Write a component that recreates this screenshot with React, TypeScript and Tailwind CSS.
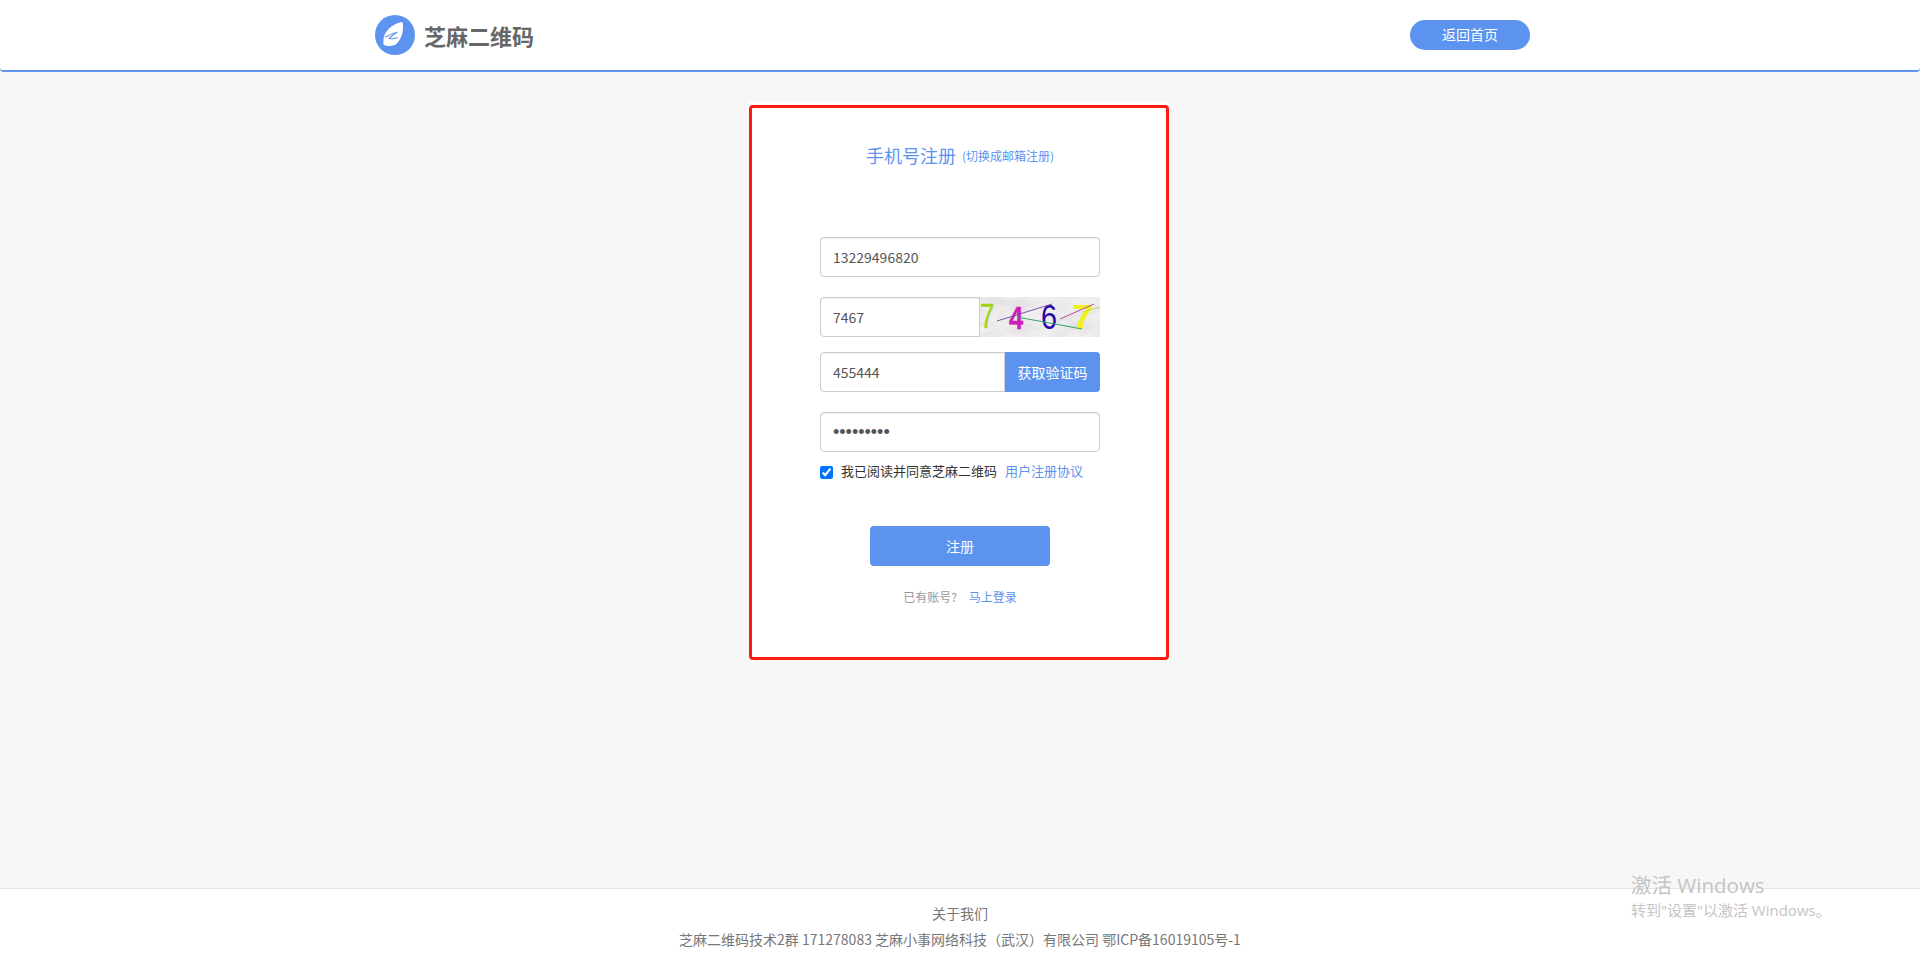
import React from 'react';

const fontStack = { fontFamily: '"Noto Sans CJK SC", "Noto Sans", sans-serif' };

function LogoMark() {
  return (
    <svg width="40" height="40" viewBox="0 0 40 40" className="shrink-0">
      <circle cx="20" cy="20" r="20" fill="#5b93ef" />
      <path d="M27.500 7C20 8 12.500 13 9.500 20c-1 3-1.400 6-1 9.500 3 2 7 2 10.500 .8C23 28.500 26 23.500 27.300 18.500 28.300 14 28.300 10 27.500 7z" fill="#ffffff" />
      <path d="M10.500 22c3.500-2 7.500-3.800 11.500-4.800-3 1.800-5.500 3.800-8 6.300 2.800 .6 5.700 .3 8.500-.8" fill="none" stroke="#5b93ef" strokeWidth="1.100" strokeLinecap="round" strokeLinejoin="round" />
    </svg>
  );
}

function Captcha() {
  return (
    <svg width="120" height="40" viewBox="0 0 120 40" className="block shrink-0">
      <defs>
        <filter id="paper" x="0" y="0" width="100%" height="100%">
          <feTurbulence type="fractalNoise" baseFrequency="0.04 0.08" numOctaves="3" seed="8" />
          <feColorMatrix values="0 0 0 0 0.72  0 0 0 0 0.70  0 0 0 0 0.70  2.200 0 0 0 -0.950" />
        </filter>
      </defs>
      <rect width="120" height="40" fill="#efedee" />
      <rect width="120" height="40" filter="url(#paper)" opacity="0.8" />
      <g fontFamily="Liberation Sans">
        <text transform="translate(0 31) scale(.72 1)" fontSize="36" fill="#a3d11f" stroke="#a3d11f" strokeWidth="0.500">7</text>
        <text transform="translate(29 32) scale(.8 1)" fontSize="32" fontWeight="700" fill="#cc1fb5" stroke="#cc1fb5" strokeWidth="0.500">4</text>
        <text transform="translate(61 32) scale(.8 1)" fontSize="36" fill="#2b06a8">6</text>
        <text transform="translate(92 32) scale(1.100 1)" fontSize="35" fontWeight="700" fill="#f4f01f">7</text>
      </g>
      <path d="M17 24 72 7" stroke="#6a4aa8" strokeWidth="0.900" fill="none" />
      <path d="M37 20 102 32" stroke="#2fa86b" strokeWidth="1" fill="none" />
      <path d="M80 22 114 7" stroke="#b03a98" strokeWidth="0.900" fill="none" />
      <path d="M102 15 120 10" stroke="#c9d455" strokeWidth="0.900" fill="none" />
    </svg>
  );
}

const inputClass =
  'h-10 min-w-0 border border-[#cccccc] bg-white px-3 text-sm text-[#555555] shadow-[inset_0_1px_1px_rgba(0,0,0,0.075)] outline-none';

export default function App() {
  return (
    <div className="relative flex h-[969px] flex-col overflow-hidden bg-[#f7f7f7]" style={fontStack}>
      <header className="h-[72px] shrink-0 rounded-b-[4px] border-b-2 border-[#5b93ef] bg-white">
        <div className="flex h-[70px] items-center justify-between pl-[375px] pr-[390px]">
          <a href="#" className="flex items-center gap-[9px]">
            <LogoMark />
            <span className="text-[22px] leading-none font-bold text-[#666666]">芝麻二维码</span>
          </a>
          <a href="#" className="flex h-[30px] w-[120px] items-center justify-center rounded-full bg-[#5b93ef] pb-[2px] text-sm text-white">
            返回首页
          </a>
        </div>
      </header>

      <main className="flex flex-1 justify-center pr-[2px] pt-[30px]">
        <div className="h-[558px] w-[420px] bg-white pt-[3px]">
          <div className="h-[555px] rounded-[4px] border-[3px] border-[#fb1d10] pl-[68px] pr-[66px]">
            <h1 className="flex h-[94px] items-center justify-center gap-[6px] text-[#5b93ef]">
              <span className="text-[18px]">手机号注册</span>
              <a href="#" className="pt-[2px] text-xs">(切换成邮箱注册)</a>
            </h1>

            <form className="mt-[35px] flex flex-col">
              <input defaultValue="13229496820" className={`${inputClass} rounded-[4px]`} />
              <div className="mt-5 flex">
                <input defaultValue="7467" className={`${inputClass} w-[160px] rounded-l-[4px]`} />
                <Captcha />
              </div>
              <div className="mt-[15px] flex">
                <input defaultValue="455444" className={`${inputClass} w-[185px] rounded-l-[4px]`} />
                <button type="button" className="h-10 w-[95px] rounded-r-[4px] bg-[#5b93ef] pb-px text-sm text-white">
                  获取验证码
                </button>
              </div>
              <input
                type="password"
                defaultValue="123456789"
                className={`${inputClass} mt-5 rounded-[4px] font-['Liberation_Sans'] text-[18px]`}
              />

              <label className="mt-[14px] flex h-[13px] items-center text-[13px] text-[#333333]">
                <input type="checkbox" defaultChecked className="m-0 h-[13px] w-[13px]" />
                <span className="ml-2 pb-[3px]">我已阅读并同意芝麻二维码</span>
                <a href="#" className="ml-2 pb-[3px] text-[#5b93ef]">用户注册协议</a>
              </label>

              <button type="button" className="mx-auto mt-[47px] h-10 w-[180px] rounded-[4px] bg-[#5b93ef] pb-px text-sm text-white">
                注册
              </button>

              <p className="mt-[22px] text-center text-xs leading-[18px] text-[#999999]">
                已有账号?
                <a href="#" className="ml-3 text-[#5b93ef]">马上登录</a>
              </p>
            </form>
          </div>
        </div>
      </main>

      <footer className="h-[81px] shrink-0 border-t border-[#e6e6e6] bg-white pt-[11px] text-center text-sm leading-[26px] text-[#777777]">
        <p>关于我们</p>
        <p>芝麻二维码技术2群 171278083 芝麻小事网络科技（武汉）有限公司 鄂ICP备16019105号-1</p>
      </footer>

      <div className="pointer-events-none absolute left-[1631px] top-[872px] font-['Open_Sans','Noto_Sans_CJK_SC',sans-serif] text-[#c4c4c4]">
        <p className="text-[20.500px] leading-[27px]">激活 Windows</p>
        <p className="text-[15px] leading-[22px]">转到"设置"以激活 Windows。</p>
      </div>
    </div>
  );
}
